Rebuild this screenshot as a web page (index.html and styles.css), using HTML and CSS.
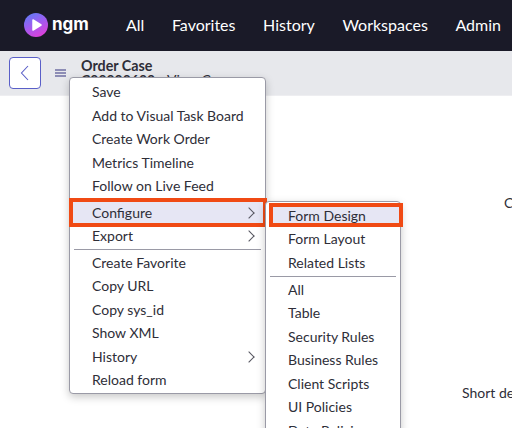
FILE: index.html
```html
<!DOCTYPE html>
<html lang="en">
<head>
  <meta charset="UTF-8">
  <title>Order Case</title>
  <link rel="stylesheet" href="styles.css">
</head>
<body>
  <header class="topbar">
    <a class="logo">
      <svg width="24" height="24" viewBox="0 0 24 24">
        <defs>
          <linearGradient id="logo-grad" x1="0.2" y1="0" x2="0.7" y2="1">
            <stop offset="0" stop-color="#5f7bf5"/>
            <stop offset="0.5" stop-color="#a25af0"/>
            <stop offset="1" stop-color="#e03fd8"/>
          </linearGradient>
        </defs>
        <circle cx="12" cy="12" r="12" fill="url(#logo-grad)"/>
        <path d="M9 7 L17 12 L9 17 Z" fill="#fff" stroke="#fff" stroke-width="1.5" stroke-linejoin="round"/>
      </svg>
      <span class="logo-text">ngm</span>
    </a>
    <nav class="nav">
      <a>All</a>
      <a>Favorites</a>
      <a>History</a>
      <a>Workspaces</a>
      <a>Admin</a>
    </nav>
  </header>

  <div class="subbar">
    <button class="back">
      <svg width="10" height="16" viewBox="0 0 10 16"><path d="M8 1 L1.5 8 L8 15" fill="none" stroke="#5a5fc8" stroke-width="1.1"/></svg>
    </button>
    <span class="burger"></span>
    <div class="title">
      <div class="title-main">Order Case</div>
      <div class="title-sub"><b>C00000600</b> - View Case</div>
    </div>
  </div>

  <main class="form-area">
    <div class="field-label first">Case</div>
    <div class="field-label second">Short description</div>
  </main>

  <div class="menu context">
    <ul>
      <li>Save</li>
      <li>Add to Visual Task Board</li>
      <li>Create Work Order</li>
      <li>Metrics Timeline</li>
      <li>Follow on Live Feed</li>
      <li class="sep-top has-sub boxed">Configure</li>
      <li class="has-sub">Export</li>
      <li class="rule"></li>
      <li>Create Favorite</li>
      <li>Copy URL</li>
      <li>Copy sys_id</li>
      <li>Show XML</li>
      <li class="has-sub">History</li>
      <li>Reload form</li>
    </ul>
  </div>

  <div class="menu submenu">
    <ul>
      <li class="boxed">Form Design</li>
      <li>Form Layout</li>
      <li>Related Lists</li>
      <li class="rule"></li>
      <li>All</li>
      <li>Table</li>
      <li>Security Rules</li>
      <li>Business Rules</li>
      <li>Client Scripts</li>
      <li>UI Policies</li>
      <li>Data Policies</li>
    </ul>
  </div>
</body>
</html>
```
FILE: styles.css
```css
html, body {
  height: 100%;
}

body {
  margin: 0;
  overflow: hidden;
  background-color: #fff;
  color: #2e2e38;
  font-family: Lato, "Liberation Sans", sans-serif;
  font-size: 14px;
}

.topbar {
  display: flex;
  align-items: center;
  height: 51px;
  padding-left: 24px;
  padding-bottom: 2px;
  box-sizing: border-box;
  background-color: #1a1a28;
  color: #fff;
}

.logo {
  display: flex;
  align-items: center;
  gap: 4px;
  width: 102px;
}

.logo-text {
  font-family: Inter, sans-serif;
  font-size: 17px;
  font-weight: 700;
  line-height: 24px;
  margin-top: -1px;
}

.nav {
  display: flex;
  gap: 27.6px;
  font-size: 16px;
  white-space: nowrap;
}

.subbar {
  display: flex;
  align-items: center;
  height: 45px;
  padding-left: 9px;
  background-color: #e7e8ec;
  border-bottom: 1px solid #eeeef1;
  box-sizing: border-box;
}

.back {
  display: flex;
  align-items: center;
  justify-content: center;
  width: 32px;
  height: 32px;
  padding: 0;
  background-color: #fff;
  border: 1px solid #5a5fc8;
  border-radius: 4px;
}

.burger {
  width: 11px;
  height: 2px;
  margin-left: 14px;
  background-color: #8d8db5;
  box-shadow: 0 -3px 0 #8d8db5, 0 3px 0 #8d8db5;
}

.title {
  margin-left: 15px;
  align-self: flex-start;
  padding-top: 8px;
}

.title-main {
  font-weight: 700;
  font-size: 14.3px;
  line-height: 14px;
}

.title-sub {
  font-size: 14px;
  line-height: 14px;
  white-space: nowrap;
}

.form-area {
  display: flex;
  flex-direction: column;
  white-space: nowrap;
}

.field-label.first {
  margin-top: 98px;
  margin-left: 504px;
}

.field-label.second {
  margin-top: 173px;
  margin-left: 462px;
}

/* menus sit over the page */
.menu {
  position: absolute;
  z-index: 1;
  box-sizing: border-box;
  background-color: #fff;
  border: 1px solid #9a9aa6;
  border-radius: 4px;
  box-shadow: 0 3px 8px rgba(0, 0, 0, 0.22);
}

.context {
  left: 69px;
  top: 77px;
  width: 197px;
  padding-top: 2px;
  padding-bottom: 1px;
}

.submenu {
  left: 265px;
  top: 201px;
  width: 136px;
  height: 260px;
  padding-top: 1.75px;
}

.menu ul {
  list-style: none;
  margin: 0;
  padding: 0;
}

.menu li {
  position: relative;
  height: 23.5px;
  line-height: 23.5px;
  padding-left: 22px;
  white-space: nowrap;
}

.context li.sep-top {
  margin-top: 3px;
}

.menu li.rule {
  height: 1px;
  margin: 1.5px 4px 0.75px;
  padding: 0;
  background-color: #9a9aa6;
}

/* orange marker around the highlighted row */
.menu li.boxed::before {
  content: "";
  position: absolute;
  z-index: -1;
  box-sizing: border-box;
  background-color: #e6e6f4;
  border: 4px solid #f04a14;
}

.context li.boxed::before {
  top: -3px;
  bottom: -3px;
  left: -1px;
  right: -2px;
}

.submenu li.boxed::before {
  top: -1px;
  bottom: 0;
  left: 3px;
  right: -3px;
}

.has-sub::after {
  content: "";
  position: absolute;
  right: 12px;
  top: 8px;
  width: 7px;
  height: 7px;
  border-top: 1px solid #55555f;
  border-right: 1px solid #55555f;
  transform: rotate(45deg);
}
```
